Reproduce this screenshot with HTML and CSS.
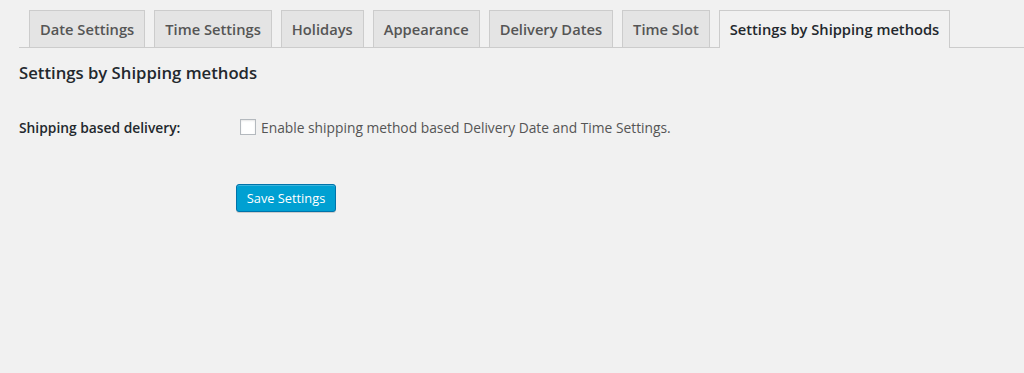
FILE: index.html
```html
<!DOCTYPE html>
<html>
<head>
<meta charset="utf-8">
<link rel="stylesheet" href="styles.css">
</head>
<body>
<div class="wrap">
  <nav class="tabs">
    <a class="tab">Date Settings</a>
    <a class="tab">Time Settings</a>
    <a class="tab">Holidays</a>
    <a class="tab">Appearance</a>
    <a class="tab">Delivery Dates</a>
    <a class="tab">Time Slot</a>
    <a class="tab active">Settings by Shipping methods</a>
  </nav>
  <h2 class="title">Settings by Shipping methods</h2>
  <div class="row">
    <div class="label">Shipping based delivery:</div>
    <label class="field"><span class="checkbox"></span><span class="desc">Enable shipping method based Delivery Date and Time Settings.</span></label>
  </div>
  <div class="actions">
    <button class="button">Save Settings</button>
  </div>
</div>
</body>
</html>
```

FILE: styles.css
```css
html, body {
  margin: 0;
  padding: 0;
  background: #f1f1f1;
}
body {
  font-family: "Open Sans", "Liberation Sans", sans-serif;
  color: #444;
  width: 1024px;
  height: 373px;
  overflow: hidden;
}
.wrap {
  padding-left: 19px;
}
.tabs {
  display: flex;
  align-items: flex-end;
  padding-top: 10px;
  border-bottom: 1px solid #ccc;
  height: 37px;
  box-sizing: content-box;
}
.tab {
  display: block;
  margin-left: 9px;
  padding: 6px 10px;
  line-height: 24px;
  font-size: 14.7px;
  font-weight: 600;
  color: #555;
  background: #e4e4e4;
  border: 1px solid #ccc;
  border-bottom: none;
  white-space: nowrap;
}
.tab:first-child {
  margin-left: 10px;
}
.tab.active {
  background: #f1f1f1;
  color: #23282d;
  margin-bottom: -1px;
  padding-bottom: 7px;
}
.title {
  margin: 0;
  padding-top: 14px;
  font-size: 16.7px;
  line-height: 22px;
  font-weight: 600;
  color: #23282d;
}
.row {
  display: flex;
  align-items: center;
  margin-top: 32px;
  height: 22px;
}
.label {
  width: 221px;
  font-size: 13.8px;
  font-weight: 600;
  color: #23282d;
}
.field {
  display: flex;
  align-items: center;
  font-size: 13.8px;
  color: #555;
}
.checkbox {
  width: 14px;
  height: 14px;
  border: 1px solid #b4b9be;
  background: #fff;
  box-shadow: inset 0 1px 2px rgba(0,0,0,0.1);
  margin-right: 5px;
}
.actions {
  margin-top: 46px;
  padding-left: 217px;
}
.button {
  font-family: "Open Sans", "Liberation Sans", sans-serif;
  font-size: 12.8px;
  height: 28px;
  width: 100px;
  padding: 0 8px;
  line-height: 26px;
  color: #fff;
  background: #00a0d2;
  border: 1px solid #0073aa;
  border-radius: 3px;
  box-shadow: inset 0 1px 0 rgba(120,200,230,.5), 0 1px 0 rgba(0,0,0,.15);
  white-space: nowrap;
}
```
